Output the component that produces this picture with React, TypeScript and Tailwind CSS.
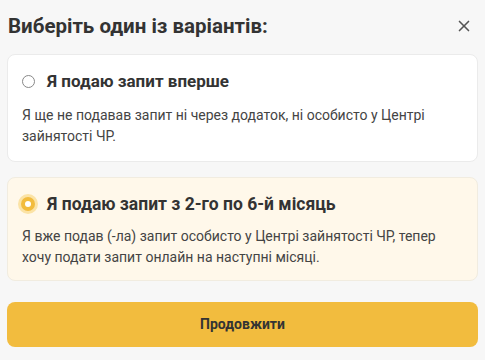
import { X } from "lucide-react";

const options = [
  {
    id: "first",
    title: "Я подаю запит вперше",
    text: "Я ще не подавав запит ні через додаток, ні особисто у Центрі зайнятості ЧР.",
  },
  {
    id: "next",
    title: "Я подаю запит з 2-го по 6-й місяць",
    text: "Я вже подав (-ла) запит особисто у Центрі зайнятості ЧР, тепер хочу подати запит онлайн на наступні місяці.",
  },
];

export default function App() {
  const selected = "next";

  return (
    <div className="w-[485px] h-[360px] bg-[#f7f7f7] px-[7px] pt-[12px] font-['Roboto',sans-serif] text-[#333]">
      <div className="flex items-center justify-between pl-[1px] pr-[2px]">
        <h2 className="text-[20.5px] font-bold leading-[28px]">Виберіть один із варіантів:</h2>
        <button className="w-[24px] h-[24px] flex items-center justify-center text-[#555]">
          <X className="w-[18px] h-[18px]" strokeWidth={2.2} />
        </button>
      </div>

      <div className="mt-[14px] flex flex-col gap-[15px]">
        {options.map((o) => {
          const active = o.id === selected;
          return (
            <div
              key={o.id}
              className={
                active
                  ? "rounded-[8px] border border-[#f1ece0] bg-[#fff8ea] px-[14px] pt-[14px] pb-[12px]"
                  : "rounded-[8px] border border-[#ebebeb] bg-white px-[14px] pt-[14px] pb-[14px]"
              }
            >
              <div className="flex items-center gap-[12px]">
                {active ? (
                  <span className="w-[14px] h-[14px] ml-[-1px] rounded-full bg-[#f2bc3e] flex items-center justify-center ring-[3px] ring-[#fbe3a6]">
                    <span className="w-[6px] h-[6px] rounded-full bg-white" />
                  </span>
                ) : (
                  <span className="w-[13px] h-[13px] rounded-full border border-[#888] bg-white" />
                )}
                <span
                  className={
                    active
                      ? "text-[17.5px] font-bold leading-[24px]"
                      : "text-[17px] font-bold leading-[24px]"
                  }
                >
                  {o.title}
                </span>
              </div>
              <p
                className={
                  active
                    ? "mt-[10px] text-[14px] leading-[21px] text-[#444]"
                    : "mt-[12px] text-[14px] leading-[21px] text-[#444]"
                }
              >
                {o.text}
              </p>
            </div>
          );
        })}
      </div>

      <button className="mt-[21px] w-full h-[45px] rounded-[8px] bg-[#f2bc3e] text-[14px] font-bold text-[#333]">
        Продовжити
      </button>
    </div>
  );
}
